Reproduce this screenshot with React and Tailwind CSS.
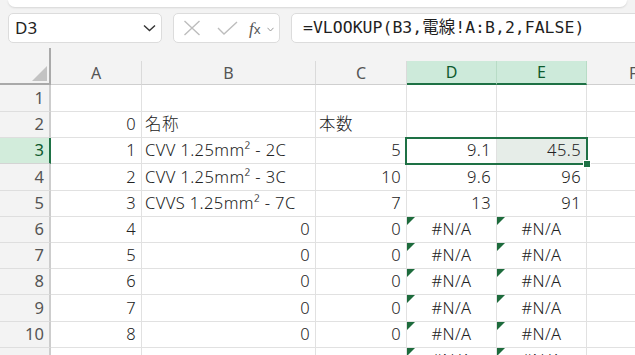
import React from "react";

const cellFont = { fontFamily: '"Noto Sans", "Noto Sans CJK JP", sans-serif' };

const rows = [
  { n: 1, h: 27, c: ["", "", "", "", ""] },
  { n: 2, h: 26, c: ["0", "名称", "本数", "", ""] },
  { n: 3, h: 26, c: ["1", "CVV 1.25mm² - 2C", "5", "9.1", "45.5"], sel: true },
  { n: 4, h: 27, c: ["2", "CVV 1.25mm² - 3C", "10", "9.6", "96"] },
  { n: 5, h: 26, c: ["3", "CVVS 1.25mm² - 7C", "7", "13", "91"] },
  { n: 6, h: 26, c: ["4", "0", "0", "#N/A", "#N/A"] },
  { n: 7, h: 26, c: ["5", "0", "0", "#N/A", "#N/A"] },
  { n: 8, h: 26, c: ["6", "0", "0", "#N/A", "#N/A"] },
  { n: 9, h: 27, c: ["7", "0", "0", "#N/A", "#N/A"] },
  { n: 10, h: 26, c: ["8", "0", "0", "#N/A", "#N/A"] },
  { n: "", h: 26, c: ["", "", "", "#N/A", "#N/A"] },
];

const widths = ["w-[91px]", "w-[174px]", "w-[91px]", "w-[90px]", "w-[90px]"];

function isNum(v) {
  return /^[0-9.]+$/.test(v);
}

function Cell({ v, w, fill }) {
  const err = v === "#N/A";
  const align = err ? "justify-center" : isNum(v) ? "justify-end pr-[5px]" : "justify-start pl-[3px]";
  return (
    <div
      className={`relative flex items-center shrink-0 h-full border-r border-b border-[#e1e1e1] text-[16.5px] font-light tracking-[0.4px] text-[#222] whitespace-nowrap ${w} ${align} ${fill ? "bg-[#e6ede8]" : "bg-white"}`}
      style={cellFont}
    >
      {err && (
        <div className="absolute left-0 top-0 w-0 h-0 border-t-[8px] border-r-[8px] border-t-[#1d6b3c] border-r-transparent" />
      )}
      {v}
    </div>
  );
}

function NameBox() {
  return (
    <div className="flex items-center justify-between w-[154px] shrink-0 h-full bg-white border border-[#dcdcdc] rounded-[5px] pl-[6px] pr-[5px]">
      <span className="text-[17px] text-[#222]" style={{ fontFamily: '"Noto Sans", sans-serif' }}>D3</span>
      <svg width="13" height="8" viewBox="0 0 13 8">
        <path d="M1 1.5 L6.5 6.5 L12 1.5" fill="none" stroke="#333" strokeWidth="1.4" />
      </svg>
    </div>
  );
}

function FuncBox() {
  return (
    <div className="flex items-center w-[107px] shrink-0 h-full bg-white border border-[#dcdcdc] rounded-[5px] pl-[9px]">
      <svg width="18" height="16" viewBox="0 0 18 16" className="mr-[16px]">
        <path d="M1.5 1 L16.5 15 M16.5 1 L1.5 15" stroke="#bdbdbd" strokeWidth="1.4" />
      </svg>
      <svg width="21" height="14" viewBox="0 0 21 14" className="mr-[11px]">
        <path d="M1 7 L7 13 L20 1" fill="none" stroke="#bdbdbd" strokeWidth="1.4" />
      </svg>
      <span className="text-[17px] text-[#555] italic leading-none" style={{ fontFamily: '"Liberation Serif", serif' }}>
        f<span className="not-italic text-[13px]" style={{ fontFamily: '"Noto Sans", sans-serif' }}>x</span>
      </span>
      <svg width="7" height="5" viewBox="0 0 7 5" className="ml-[6px] mt-[2px]">
        <path d="M0.5 0.8 L3.5 4 L6.5 0.8" fill="none" stroke="#999" strokeWidth="1" />
      </svg>
    </div>
  );
}

export default function App() {
  const headFont = { fontFamily: '"Noto Sans", "Open Sans", sans-serif' };
  return (
    <div className="w-[635px] h-[355px] overflow-hidden bg-[#f3f3f3]">
      <div className="mx-2 h-[7px] bg-white rounded-b-[8px] shadow-[0_1px_2px_rgba(0,0,0,0.12)]" />

      <div className="flex items-stretch h-[30px] mt-[6px] pl-2 gap-[11px]">
        <NameBox />
        <FuncBox />
        <div className="flex items-center w-[400px] shrink-0 h-full bg-white border border-[#dcdcdc] rounded-[5px] pl-[11px]">
          <span
            className="text-[16.5px] text-[#1f1f1f] whitespace-nowrap"
            style={{ fontFamily: '"DejaVu Sans Mono", "Noto Sans CJK JP", monospace' }}
          >
            =VLOOKUP(B3,電線!A:B,2,FALSE)
          </span>
        </div>
      </div>

      <div className="relative mt-[5px]">
        <div className="flex h-[13px]">
          <div className="w-[51px] border-r-2 border-[#a9a9a9]" />
        </div>

        <div className="flex h-[24px]" style={headFont}>
          <div className="relative w-[51px] shrink-0 h-full border-r-2 border-b-2 border-[#a9a9a9]">
            <div className="absolute right-[2px] bottom-[2px] w-0 h-0 border-l-[15px] border-l-transparent border-b-[15px] border-b-[#c3c3c3]" />
          </div>
          {["A", "B", "C", "D", "E"].map((l, i) => {
            const on = l === "D" || l === "E";
            return (
              <div
                key={l}
                className={`flex items-center justify-center shrink-0 h-full text-[16px] ${widths[i]} ${
                  on
                    ? "bg-[#cdeada] text-[#0f5a2e] border-b-2 border-b-[#1e7145] border-r border-r-[#b8dcc6]"
                    : "text-[#555] border-b border-b-[#cfcfcf] border-r border-r-[#dadada]"
                }`}
              >
                {l}
              </div>
            );
          })}
          <div className="flex-1 h-full border-b border-[#cfcfcf] pl-[42px] flex items-center text-[16px] text-[#555]">F</div>
        </div>

        {rows.map((r, idx) => (
          <div key={idx} className={`flex ${r.h === 27 ? "h-[27px]" : "h-[26px]"}`}>
            <div
              className={`flex items-center justify-end pr-[5px] w-[51px] shrink-0 h-full border-b text-[16.5px] ${
                r.sel
                  ? "bg-[#d2ecdb] text-[#0f5a2e] border-r-2 border-r-[#1e7145] border-b-[#d4d4d4]"
                  : "bg-[#f3f3f3] text-[#555] border-r-2 border-r-[#cdcdcd] border-b-[#dedede]"
              }`}
              style={headFont}
            >
              {r.n}
            </div>
            {r.c.map((v, i) => (
              <Cell key={i} v={v} w={widths[i]} fill={r.sel && i === 4} />
            ))}
            <div className="flex-1 h-full bg-white border-b border-[#e1e1e1]" />
          </div>
        ))}

        <div className="absolute left-[405px] top-[89px] w-[183px] h-[28px] border-2 border-[#1e7145]">
          <div className="absolute -right-[4px] -bottom-[4px] w-[6px] h-[6px] bg-[#1e7145] outline outline-1 outline-white" />
        </div>
      </div>
    </div>
  );
}
